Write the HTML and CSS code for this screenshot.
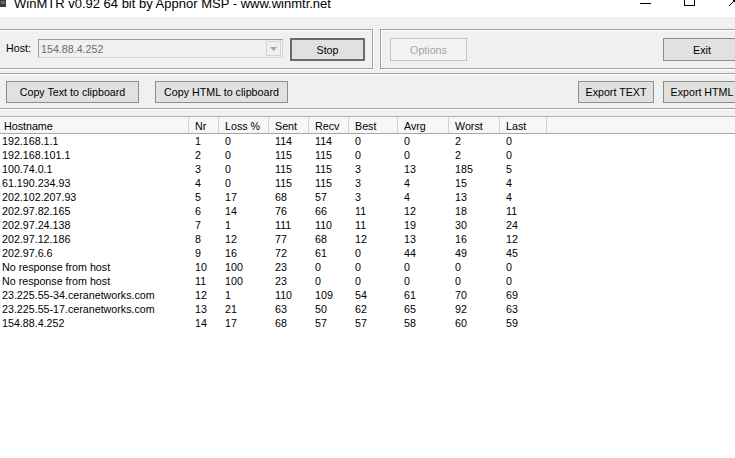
FILE: index.html
```html
<!DOCTYPE html>
<html lang="en">
<head>
    <meta charset="UTF-8">
    <title>WinMTR v0.92 64 bit by Appnor MSP - www.winmtr.net</title>
    <link rel="stylesheet" href="styles.css">
</head>
<body>
    <div class="window">
        <div class="titlebar">
            <svg class="app-icon" width="6" height="7" viewBox="0 0 6 7">
                <rect x="0" y="0" width="6" height="7" fill="#3a3a3a"/>
                <rect x="1" y="1" width="4" height="3" fill="#6a6a6a"/>
            </svg>
            <span class="title">WinMTR v0.92 64 bit by Appnor MSP - www.winmtr.net</span>
            <div class="caption-buttons">
                <span class="caption-btn">
                    <svg width="44" height="17" viewBox="0 0 44 17"><line x1="16" y1="3.5" x2="27" y2="3.5" stroke="#000" stroke-width="1"/></svg>
                </span>
                <span class="caption-btn">
                    <svg width="44" height="17" viewBox="0 0 44 17"><rect x="16.5" y="-4.5" width="10" height="10" fill="none" stroke="#000" stroke-width="1"/></svg>
                </span>
                <span class="caption-btn">
                    <svg width="44" height="17" viewBox="0 0 44 17"><path d="M17 -4 L27 6 M27 -4 L17 6" stroke="#000" stroke-width="1"/></svg>
                </span>
            </div>
        </div>

        <div class="client">
            <div class="top-row">
                <div class="group group-host">
                    <label class="host-label">Host:</label>
                    <div class="combo">
                        <span class="combo-text">154.88.4.252</span>
                        <span class="combo-drop">
                            <svg width="7" height="4" viewBox="0 0 7 4"><path d="M0 0 L7 0 L3.5 4 Z" fill="#a6a6a6"/></svg>
                        </span>
                    </div>
                    <button class="btn btn-stop">Stop</button>
                </div>
                <div class="group group-actions">
                    <button class="btn btn-options" disabled>Options</button>
                    <button class="btn btn-exit">Exit</button>
                </div>
            </div>

            <div class="separator"></div>

            <div class="toolbar">
                <button class="btn btn-copy">Copy Text to clipboard</button>
                <button class="btn btn-copy">Copy HTML to clipboard</button>
                <button class="btn btn-export">Export TEXT</button>
                <button class="btn btn-export">Export HTML</button>
            </div>

            <div class="separator"></div>
        </div>

        <div class="list">
            <div class="list-header">
                <span>Hostname</span>
                <span>Nr</span>
                <span>Loss %</span>
                <span>Sent</span>
                <span>Recv</span>
                <span>Best</span>
                <span>Avrg</span>
                <span>Worst</span>
                <span>Last</span>
                <span class="filler"></span>
            </div>
            <div class="row"><span>192.168.1.1</span><span>1</span><span>0</span><span>114</span><span>114</span><span>0</span><span>0</span><span>2</span><span>0</span></div>
            <div class="row"><span>192.168.101.1</span><span>2</span><span>0</span><span>115</span><span>115</span><span>0</span><span>0</span><span>2</span><span>0</span></div>
            <div class="row"><span>100.74.0.1</span><span>3</span><span>0</span><span>115</span><span>115</span><span>3</span><span>13</span><span>185</span><span>5</span></div>
            <div class="row"><span>61.190.234.93</span><span>4</span><span>0</span><span>115</span><span>115</span><span>3</span><span>4</span><span>15</span><span>4</span></div>
            <div class="row"><span>202.102.207.93</span><span>5</span><span>17</span><span>68</span><span>57</span><span>3</span><span>4</span><span>13</span><span>4</span></div>
            <div class="row"><span>202.97.82.165</span><span>6</span><span>14</span><span>76</span><span>66</span><span>11</span><span>12</span><span>18</span><span>11</span></div>
            <div class="row"><span>202.97.24.138</span><span>7</span><span>1</span><span>111</span><span>110</span><span>11</span><span>19</span><span>30</span><span>24</span></div>
            <div class="row"><span>202.97.12.186</span><span>8</span><span>12</span><span>77</span><span>68</span><span>12</span><span>13</span><span>16</span><span>12</span></div>
            <div class="row"><span>202.97.6.6</span><span>9</span><span>16</span><span>72</span><span>61</span><span>0</span><span>44</span><span>49</span><span>45</span></div>
            <div class="row"><span>No response from host</span><span>10</span><span>100</span><span>23</span><span>0</span><span>0</span><span>0</span><span>0</span><span>0</span></div>
            <div class="row"><span>No response from host</span><span>11</span><span>100</span><span>23</span><span>0</span><span>0</span><span>0</span><span>0</span><span>0</span></div>
            <div class="row"><span>23.225.55-34.ceranetworks.com</span><span>12</span><span>1</span><span>110</span><span>109</span><span>54</span><span>61</span><span>70</span><span>69</span></div>
            <div class="row"><span>23.225.55-17.ceranetworks.com</span><span>13</span><span>21</span><span>63</span><span>50</span><span>62</span><span>65</span><span>92</span><span>63</span></div>
            <div class="row"><span>154.88.4.252</span><span>14</span><span>17</span><span>68</span><span>57</span><span>57</span><span>58</span><span>60</span><span>59</span></div>
        </div>
    </div>
</body>
</html>
```

FILE: styles.css
```css
:root {
    --face: #f0f0f0;
    --etch-dark: #a0a0a0;
    --btn-face: #e1e1e1;
    --btn-border: #8c8c8c;
    --cols: 189px 30px 50px 40px 40px 49px 51px 51px 47px 1fr;
}

body {
    margin: 0;
    overflow: hidden;
    background: white;
}

.window {
    width: 735px;
    height: 458px;
    display: flex;
    flex-direction: column;
    overflow: hidden;
    font: 10.7px "Liberation Sans", Arial, sans-serif;
    color: #000;
}

/* title bar (window top is off screen, so everything is cut) */
.titlebar {
    flex: none;
    height: 17px;
    display: flex;
    align-items: flex-start;
    background: white;
    overflow: hidden;
}

.app-icon {
    flex: none;
}

.title {
    margin-left: 8px;
    margin-top: -5px;
    font-size: 13px;
    line-height: 17px;
    white-space: nowrap;
}

.caption-buttons {
    display: flex;
    margin-left: auto;
    margin-right: -21px;
}

.caption-btn {
    width: 44px;
    height: 17px;
}

.caption-btn svg {
    display: block;
}

/* dialog area */
.client {
    flex: none;
    background: var(--face);
    padding-bottom: 6px;
}

.top-row {
    display: flex;
    padding-top: 12px;
}

.group {
    box-sizing: border-box;
    height: 40px;
    display: flex;
    align-items: flex-start;
    padding-top: 8px;
    border: 1px solid var(--etch-dark);
    box-shadow: inset 1px 1px 0 #fff, 1px 1px 0 #fff;
}

.group-host {
    flex: none;
    width: 375px;
    margin-left: -2px;
    padding-left: 7px;
}

.group-actions {
    flex: none;
    width: 371px;
    margin-left: 7px;
    padding-left: 9px;
    padding-right: 9px;
}

.host-label {
    width: 25px;
    line-height: 21px;
    white-space: nowrap;
}

.combo {
    box-sizing: border-box;
    width: 245px;
    height: 19px;
    margin: 1px 7px 0;
    display: flex;
    align-items: center;
    background: var(--face);
    border: 1px solid;
    border-color: #9a9a9a #d6d6d6 #d6d6d6 #9a9a9a;
    color: #6d6d6d;
}

.combo-text {
    padding-left: 2px;
}

.combo-drop {
    box-sizing: border-box;
    width: 15px;
    height: 15px;
    margin-left: auto;
    margin-right: 1px;
    display: flex;
    align-items: center;
    justify-content: center;
    border: 1px solid #d4d4d4;
}

.btn {
    flex: none;
    box-sizing: border-box;
    height: 22px;
    padding: 0;
    background: var(--btn-face);
    border: 1px solid var(--btn-border);
    font: inherit;
    color: #000;
    white-space: nowrap;
}

.btn-stop {
    width: 75px;
    height: 23px;
    border: 2px solid #6a6a6a;
}

.btn-options {
    width: 77px;
    height: 23px;
    background: #f3f3f3;
    border-color: #c4c4c4;
    color: #a3a3a3;
}

.btn-exit {
    width: 78px;
    height: 23px;
    margin-left: auto;
}

.separator {
    height: 0;
    border-top: 1px solid var(--etch-dark);
    border-bottom: 1px solid #fff;
}

.top-row + .separator {
    margin-top: 4px;
}

.toolbar {
    display: flex;
    margin: 6px -6px 5px 0;
    padding-left: 6px;
}

.btn-copy {
    width: 133px;
}

.btn-copy + .btn-copy {
    margin-left: 16px;
}

.btn-export {
    width: 76px;
    margin-left: auto;
}

.btn-export + .btn-export {
    width: 78px;
    margin-left: 9px;
}

/* report list */
.list {
    flex: 1;
    background: white;
    border-top: 1px solid #b4b4b4;
}

.list-header {
    box-sizing: border-box;
    height: 17px;
    display: grid;
    grid-template-columns: var(--cols);
    background: #f7f7f7;
    border-bottom: 1px solid #a8a8a8;
}

.list-header span {
    padding: 2px 0 0 6px;
    line-height: 14px;
    border-right: 1px solid #d2d2d2;
    white-space: nowrap;
    overflow: hidden;
}

.list-header span:first-child {
    padding-left: 4px;
}

.list-header .filler {
    border-right: none;
}

.row {
    display: grid;
    grid-template-columns: var(--cols);
    height: 14px;
    line-height: 14px;
}

.row span {
    padding-left: 6px;
    white-space: nowrap;
    overflow: hidden;
}

.row span:first-child {
    padding-left: 2px;
}
```
